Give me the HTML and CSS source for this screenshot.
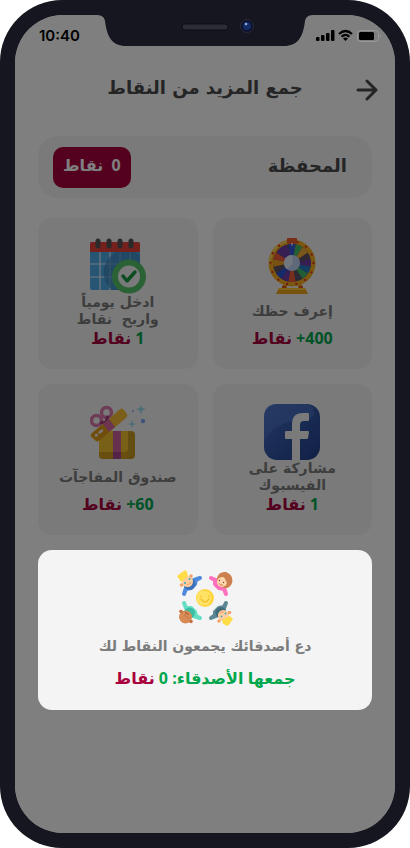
FILE: index.html
```html
<!DOCTYPE html>
<html lang="ar" dir="rtl">
<head>
  <meta charset="utf-8">
  <meta name="viewport" content="width=device-width, initial-scale=1">
  <title>جمع المزيد من النقاط</title>
  <link rel="stylesheet" href="styles.css">
</head>
<body>
  <div class="phone">
    <div class="screen">

      <svg class="notch" width="220" height="31" viewBox="0 0 220 31">
        <path fill="#15161f" d="M0 0H220C214 0 211 1 210 6C208 22 203 31 189 31H31C17 31 12 22 10 6C9 1 6 0 0 0Z"/>
        <rect x="87" y="9" width="46" height="6" rx="3" fill="#2c2d35" stroke="#0d0e14"/>
        <circle cx="152" cy="11" r="6.5" fill="#0d1230" stroke="#292b38"/>
        <circle cx="152" cy="11" r="4" fill="#142c66"/>
        <circle cx="151" cy="9" r="1.3" fill="#8ea6d8"/>
      </svg>

      <div class="status" dir="ltr">
        <span class="time">10:40</span>
        <svg width="66" height="14" viewBox="0 0 66 14">
          <rect x="0" y="8" width="3.500" height="4" rx="1"/>
          <rect x="5" y="6" width="3.500" height="6" rx="1"/>
          <rect x="10" y="4" width="3.500" height="8" rx="1"/>
          <rect x="15" y="1" width="3.500" height="11" rx="1"/>
          <path fill="none" stroke="#000" stroke-width="2.2" d="M23 5Q29.500 -1 36 5M25.500 7.800Q29.500 4 33.500 7.800"/>
          <path d="M27 9.500Q29.500 7.500 32 9.500L29.500 12Z"/>
          <rect x="41.500" y="1.500" width="21" height="11" rx="3" fill="none" stroke="#999"/>
          <rect x="43" y="3" width="15" height="8" rx="1.500"/>
          <path fill="#999" d="M64 5Q66 7 64 9Z"/>
        </svg>
      </div>

      <header class="header">
        <button class="back" type="button" aria-label="رجوع">
          <svg width="22" height="22" viewBox="0 0 22 22" fill="none" stroke="#4a4a4a" stroke-width="3" stroke-linecap="round" stroke-linejoin="round">
            <path d="M2 11H20M11 2L20 11L11 20"/>
          </svg>
        </button>
        <h1>جمع المزيد من النقاط</h1>
      </header>

      <main class="content">
        <section class="wallet">
          <h2>المحفظة</h2>
          <button class="balance" type="button">0&nbsp; نقاط</button>
        </section>

        <div class="tasks">
          <button class="card" type="button">
            <svg class="icon" viewBox="0 0 56 56">
              <path fill="#e8a317" d="M19 46H23V51H19ZM34 46H38V51H34Z"/>
              <path fill="#e2502a" d="M18 48H22V51H18ZM35 48H39V51H35Z"/>
              <path fill="#f0a51e" d="M15 50H41L44 56H12Z"/>
              <path fill="#ffca38" d="M15 50H41L42 52H14Z"/>
              <circle cx="28" cy="25" r="23.500" fill="#f6ae22"/>
              <path fill="none" stroke="#ffd85a" stroke-width="2" d="M6 25A22 22 0 0 1 28 3"/>
              <circle cx="28" cy="25" r="21.500" fill="none" stroke="#e33b24" stroke-width="2.400" stroke-linecap="round" stroke-dasharray="0 9.650"/>
              <circle cx="28" cy="25" r="19" fill="#5b5063"/>
              <g fill="none" stroke-width="12" transform="rotate(-11 28 25)">
                <circle cx="28" cy="25" r="13" stroke="#713fa6" pathLength="16" stroke-dasharray="1 15"/>
                <circle cx="28" cy="25" r="13" stroke="#237cc4" pathLength="16" stroke-dasharray="1 15" stroke-dashoffset="-1"/>
                <circle cx="28" cy="25" r="13" stroke="#42b968" pathLength="16" stroke-dasharray="1 15" stroke-dashoffset="-2"/>
                <circle cx="28" cy="25" r="13" stroke="#f35b36" pathLength="16" stroke-dasharray="1 15" stroke-dashoffset="-4"/>
                <circle cx="28" cy="25" r="13" stroke="#713fa6" pathLength="16" stroke-dasharray="1 15" stroke-dashoffset="-5"/>
                <circle cx="28" cy="25" r="13" stroke="#2c55d4" pathLength="16" stroke-dasharray="1 15" stroke-dashoffset="-6"/>
                <circle cx="28" cy="25" r="13" stroke="#f3a526" pathLength="16" stroke-dasharray="1 15" stroke-dashoffset="-8"/>
                <circle cx="28" cy="25" r="13" stroke="#f35b36" pathLength="16" stroke-dasharray="1 15" stroke-dashoffset="-9"/>
                <circle cx="28" cy="25" r="13" stroke="#713fa6" pathLength="16" stroke-dasharray="2 14" stroke-dashoffset="-10"/>
                <circle cx="28" cy="25" r="13" stroke="#3454dc" pathLength="16" stroke-dasharray="1 15" stroke-dashoffset="-12"/>
                <circle cx="28" cy="25" r="13" stroke="#49bd65" pathLength="16" stroke-dasharray="1 15" stroke-dashoffset="-13"/>
                <circle cx="28" cy="25" r="13" stroke="#f3ad32" pathLength="16" stroke-dasharray="1 15" stroke-dashoffset="-14"/>
              </g>
              <circle cx="28" cy="25" r="8" fill="#bfd2f5"/>
              <path fill="#e2ecff" d="M20 25A8 8 0 0 1 28 17L29 25L23 31Q20 29 20 25Z"/>
              <path fill="#ee5a2c" d="M23 0H33V4Q33 6 31 6H25Q23 6 23 4Z"/>
              <path fill="#eee" d="M27 5H29L28 9Z"/>
            </svg>
            <span class="name">إعرف حظك</span>
            <span class="points"><b dir="ltr">+400</b> نقاط</span>
          </button>

          <button class="card" type="button">
            <svg class="icon" viewBox="0 0 56 56">
              <rect y="4" width="50" height="48" rx="2" fill="#4fabe8"/>
              <path stroke="#e8f3fa" stroke-width="1.200" d="M10 14V52M20 14V52M30 14V52M40 14V52M0 26H50M0 39H50"/>
              <path fill="#3f86bd" fill-opacity=".7" d="M50 17V52H22A21 21 0 0 1 50 17Z"/>
              <path fill="#e8433c" d="M2 4H48Q50 4 50 6V14H0V6Q0 4 2 4Z"/>
              <path stroke="#555" stroke-width="5" stroke-linecap="round" d="M8 3V8M19 3V8M30 3V8M41 3V8"/>
              <circle cx="39" cy="38.500" r="14" fill="#f5f5f5" stroke="#54c26a" stroke-width="6"/>
              <path fill="none" stroke="#179c43" stroke-width="3.500" stroke-linecap="round" stroke-linejoin="round" d="M33 38L37 43L45 34"/>
            </svg>
            <span class="name">ادخل يومياً<br>واربح&nbsp; نقاط</span>
            <span class="points"><b>1</b> نقاط</span>
          </button>

          <button class="card" type="button">
            <svg class="icon" viewBox="0 0 56 56">
              <defs>
                <linearGradient id="fb" x1="0" y1="0" x2="1" y2="1">
                  <stop offset="0" stop-color="#456fc4"/>
                  <stop offset="1" stop-color="#223f8c"/>
                </linearGradient>
              </defs>
              <rect width="56" height="56" rx="13" fill="url(#fb)"/>
              <path fill="#5078cb" fill-opacity=".55" d="M13 0H43Q50 1 50 9Q49 17 37 16Q10 18 0 37V13Q0 0 13 0Z"/>
              <path fill="#f4f4f4" d="M28 56V35H22Q21 35 21 34V28Q21 27 22 27H28V20Q28 9 39 9H44Q45 9 45 10V16Q45 17 44 17H40Q36 17 36 21V27H44Q45 27 45 28L44 34Q44 35 43 35H36V56Z"/>
            </svg>
            <span class="name">مشاركة على<br>الفيسبوك</span>
            <span class="points"><b>1</b> نقاط</span>
          </button>

          <button class="card" type="button">
            <svg class="icon" viewBox="0 0 56 56">
              <rect x="9" y="27" width="36" height="28" rx="4" fill="#c99a22"/>
              <path fill="#f1c22e" d="M9 27H38V45Q38 48 35 48H9Z"/>
              <path fill="#d99f1d" fill-opacity=".6" d="M9 48H35Q38 48 38 45V55H13Q9 55 9 51Z"/>
              <path fill="#ce619f" d="M23 27H31V55H23Z"/>
              <path fill="#a94990" d="M23 48H31V55H23Z"/>
              <g fill="none" stroke="#dc79ad" stroke-width="3.500">
                <circle cx="6.500" cy="16.500" r="5"/>
                <circle cx="16.500" cy="8.500" r="5"/>
              </g>
              <path fill="none" stroke="#a8407f" stroke-width="3" stroke-linejoin="round" d="M10 19L16 18L18 12"/>
              <path fill="#f5bd32" d="M2 30L29 6Q32 3 34 6L37 10Q38 12 36 14L10 36Q7 39 5 36L1 33Q0 31 2 30Z"/>
              <path fill="#e09a18" d="M2 29L13 20L19 28L10 36Q7 38 5 36L1 32Q0 31 2 29Z"/>
              <path fill="#d968a2" d="M13 20L19 15L25 23L19 28Z"/>
              <path fill="none" stroke="#f7eeee" stroke-width="2.500" stroke-linecap="round" d="M6 31.500L6.500 31M9.500 28.500L12 26.500"/>
              <path fill="#9bdcea" d="M51 1L52.500 4L56 5L52.500 6.500L51 10L49.500 6.500L46 5L49.500 4ZM42 16L43 19L46 20L43 21L42 24L41 21L38 20L41 19Z"/>
              <circle cx="53" cy="17" r="2.200" fill="#78a8f2"/>
              <circle cx="43" cy="7" r="1" fill="#78a8f2"/>
            </svg>
            <span class="name">صندوق المفاجآت</span>
            <span class="points"><b dir="ltr">+60</b> نقاط</span>
          </button>
        </div>

        <button class="card friends" type="button">
          <svg class="icon" viewBox="0 0 56 56">
            <g stroke-width="4" stroke-linecap="round" stroke-linejoin="round">
              <path stroke="#4f8bdc" fill="#4f8bdc" d="M7 24L9 18L17 10L23 8L19 10L18 14L14 18L9 19Z"/>
              <path stroke="#ff70bd" fill="#ff70bd" d="M34 8L39 10L47 18L49 24L47 19L42 18L38 14L38 10Z"/>
              <path stroke="#63dfc3" fill="#63dfc3" d="M7 33L9 38L17 46L23 48L19 46L18 42L14 38L9 38Z"/>
              <path stroke="#5e8795" fill="#5e8795" d="M49 33L47 38L39 46L34 48L38 45L38 42L42 38L47 37Z"/>
            </g>
            <circle cx="12.500" cy="14" r="6" fill="#3b6fb8"/>
            <circle cx="10.500" cy="11.500" r="5.500" fill="#ffce9e"/>
            <circle cx="4.500" cy="15" r="1.800" fill="#f3a36c"/>
            <circle cx="14" cy="6" r="1.800" fill="#f3a36c"/>
            <path fill="#ffdc48" d="M0 6L8 0L10 2L11 6L4 12Z"/>
            <path fill="none" stroke="#ee8f64" stroke-width=".8" d="M10 14.500Q13 15 13.500 12"/>
            <circle cx="8" cy="13" r="1" fill="#38a8b8"/>
            <circle cx="12.500" cy="9" r="1" fill="#38a8b8"/>

            <path fill="#cd8050" d="M40 8Q42 1 49 2Q57 5 55 13Q53 19 47 18Q39 15 40 8Z"/>
            <circle cx="45" cy="12" r="5" fill="#ffd5ad"/>
            <path fill="#cd8050" d="M40 8Q44 8 46 5L50 13L52 7L45 3Z"/>
            <path fill="none" stroke="#c65c45" stroke-width=".8" d="M42 13.500Q43 15.500 46 15"/>
            <circle cx="42.500" cy="10.500" r=".7" fill="#7a4632"/>
            <circle cx="46.500" cy="12.500" r=".7" fill="#7a4632"/>

            <circle cx="12.500" cy="43" r="5.500" fill="#3dbea3"/>
            <circle cx="8.500" cy="47" r="6.500" fill="#d98b56"/>
            <circle cx="4" cy="41.500" r="1.800" fill="#c5703f"/>
            <circle cx="14" cy="51.500" r="1.800" fill="#c5703f"/>
            <path fill="none" stroke="#9a5232" stroke-width=".9" d="M8 43Q11 42 11.500 45M8 45.500L9 46.500M11 47.500L12 48.500"/>

            <circle cx="44" cy="42.500" r="5.500" fill="#436c7a"/>
            <circle cx="46.500" cy="45.500" r="5.500" fill="#ffce9e"/>
            <circle cx="52.500" cy="42.500" r="1.800" fill="#f3a36c"/>
            <circle cx="42" cy="51" r="1.800" fill="#f3a36c"/>
            <path fill="#ffdc48" d="M45 50L53 46L56 49L51 56L46 54Z"/>
            <path fill="none" stroke="#ee8f64" stroke-width=".8" d="M43 44Q44 41 47 42"/>
            <circle cx="44.500" cy="46.500" r=".9" fill="#38a8b8"/>
            <circle cx="48.500" cy="43.500" r=".9" fill="#38a8b8"/>

            <circle cx="28" cy="28" r="9" fill="#ffd43c"/>
            <circle cx="27" cy="28" r="7.500" fill="#ffe163"/>
            <path fill="none" stroke="#edb520" stroke-width="1.200" stroke-linecap="round" d="M24 29Q28 35 32 29M24 26V26.500M32 26V26.500"/>
          </svg>
          <span class="name">دع أصدقائك يجمعون النقاط لك</span>
          <span class="points"><b>جمعها الأصدقاء: 0</b> نقاط</span>
        </button>
      </main>
    </div>
  </div>
</body>
</html>
```
FILE: styles.css
```css
* {
  box-sizing: border-box;
}

body {
  margin: 0;
  background: #fff;
  font-family: "Open Sans", "DejaVu Sans", sans-serif;
}

h1, h2 {
  margin: 0;
}

button {
  border: 0;
  padding: 0;
  font-family: inherit;
  cursor: pointer;
}

.phone {
  min-height: 100vh;
  padding: 15px;
  display: flex;
  background: #15161f;
  border-radius: 62px;
}

.screen {
  position: relative;
  flex: 1;
  overflow: hidden;
  background: #fff;
  border-radius: 48px;
}

.notch {
  position: absolute;
  top: 0;
  left: 50%;
  margin-left: -110px;
  z-index: 3;
}

.status {
  position: relative;
  z-index: 2;
  display: flex;
  justify-content: space-between;
  align-items: center;
  height: 41px;
  padding: 0 13px 0 24px;
}

.time {
  font: 600 15px/20px Inter, sans-serif;
}

.header {
  display: grid;
  grid-template-columns: 22px 1fr 22px;
  align-items: center;
  height: 68px;
  padding: 0 17px;
}

.header h1 {
  padding-bottom: 5px;
  font-family: "DejaVu Sans", sans-serif;
  font-size: 18px;
  line-height: 28px;
  text-align: center;
  color: #4a4a4a;
}

.back {
  height: 22px;
  background: none;
}

.content {
  display: flex;
  flex-direction: column;
  gap: 15px;
  padding: 12px 23px;
}

.wallet {
  display: flex;
  justify-content: space-between;
  align-items: center;
  height: 62px;
  margin-bottom: 5px;
  padding: 0 25px 0 15px;
  background: #f4f4f4;
  border-radius: 20px;
}

.wallet h2 {
  padding-bottom: 5px;
  font-size: 18px;
  line-height: 28px;
  color: #4a4a4a;
}

.balance {
  height: 41px;
  padding: 0 10px 5px;
  background: #a9003e;
  border-radius: 10px;
  color: #fff;
  font-size: 16px;
  font-weight: bold;
}

.tasks {
  display: grid;
  grid-template-columns: 1fr 1fr;
  gap: 15px;
}

.card {
  display: flex;
  flex-direction: column;
  align-items: center;
  padding: 20px 8px 21px;
  background: #f4f4f4;
  border-radius: 14px;
}

.icon {
  width: 56px;
  height: 56px;
}

.name {
  display: flex;
  align-items: center;
  height: 34px;
  font-family: "DejaVu Sans", sans-serif;
  font-size: 14px;
  line-height: 17px;
  font-weight: bold;
  color: #7b7b7b;
}

.points {
  font-size: 16px;
  line-height: 20px;
  font-weight: bold;
  color: #a9003e;
}

.points b {
  font-weight: bold;
  color: #00a74c;
}

/* the highlighted card, its shadow dims the rest of the screen */
.friends {
  position: relative;
  z-index: 1;
  padding-bottom: 20px;
  box-shadow: 0 0 0 1000px rgba(0, 0, 0, 0.5);
}

.friends .name {
  height: 40px;
}

.friends .points {
  line-height: 24px;
}
```
